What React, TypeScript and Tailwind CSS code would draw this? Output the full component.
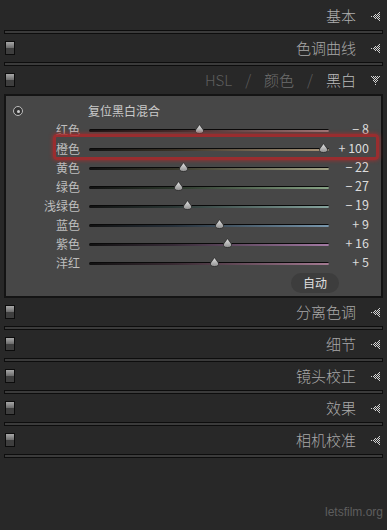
import React from "react";

const font = { fontFamily: '"Noto Sans CJK SC", "Noto Sans", sans-serif' };

function DotTriangle({ down = false }: { down?: boolean }) {
  const dots: React.ReactNode[] = [];
  for (let a = 0; a < 9; a++) {
    for (let b = 0; b < 9; b++) {
      // a: along the arrow, b: across
      const half = down ? (8 - a) / 2 : a / 2;
      if (b >= 4 - half && b <= 4 + half && (a + b) % 2 === 0) {
        const x = down ? b : a;
        const y = down ? a : b;
        dots.push(<rect key={`${a}-${b}`} x={x} y={y} width={1} height={1} fill="#d4d4d4" />);
      }
    }
  }
  return (
    <svg width={9} height={9} viewBox="0 0 9 9" className="shrink-0">
      {dots}
    </svg>
  );
}

function Switch() {
  return (
    <div className="flex h-[14px] w-[10px] flex-col border border-[#0c0c0c]">
      <div className="h-1/2 bg-[linear-gradient(to_bottom,#a8a8a8,#6a6a6a)]" />
      <div className="h-1/2 bg-[#3e3e3e]" />
    </div>
  );
}

function Separator() {
  return (
    <div className="mx-[4px] h-[4px] border border-[#0d0d0d] bg-[#3b3b3b]" />
  );
}

function Header({
  title,
  toggle = true,
  children,
}: {
  title?: string;
  toggle?: boolean;
  children?: React.ReactNode;
}) {
  return (
    <div className="flex h-[28px] items-center pl-[5px] pr-[7px]">
      <div className="w-[10px]">{toggle && <Switch />}</div>
      <div className="flex-1" />
      {children ?? <span className="text-[15px] font-light text-[#a9a9a9]">{title}</span>}
      <div className="ml-[15px]">
        <DotTriangle down={!!children} />
      </div>
    </div>
  );
}

function Thumb() {
  return (
    <svg width={11} height={10} viewBox="0 0 11 10">
      <defs>
        <linearGradient id="tg" x1="0" y1="0" x2="0" y2="1">
          <stop offset="0" stopColor="#e6e6e6" />
          <stop offset="1" stopColor="#8e8e8e" />
        </linearGradient>
      </defs>
      <path d="M5.5 0.5 L9.5 6 Q10 9.5 5.5 9.5 Q1 9.5 1.5 6 Z" fill="url(#tg)" stroke="#262626" strokeWidth="0.8" />
    </svg>
  );
}

const sliders = [
  { label: "红色", value: "− 8", v: -8, track: "bg-[linear-gradient(to_right,#111,#3a2a2a_35%,#9c7c7c)]" },
  { label: "橙色", value: "+ 100", v: 100, track: "bg-[linear-gradient(to_right,#111,#3a3226_35%,#a89478)]" },
  { label: "黄色", value: "− 22", v: -22, track: "bg-[linear-gradient(to_right,#111,#36362a_35%,#a4a486)]" },
  { label: "绿色", value: "− 27", v: -27, track: "bg-[linear-gradient(to_right,#111,#2a362a_35%,#88a486)]" },
  { label: "浅绿色", value: "− 19", v: -19, track: "bg-[linear-gradient(to_right,#111,#2a3634_35%,#86a49e)]" },
  { label: "蓝色", value: "+ 9", v: 9, track: "bg-[linear-gradient(to_right,#111,#26303a_35%,#7896ac)]" },
  { label: "紫色", value: "+ 16", v: 16, track: "bg-[linear-gradient(to_right,#111,#362a36_35%,#a47aa4)]" },
  { label: "洋红", value: "+ 5", v: 5, track: "bg-[linear-gradient(to_right,#111,#382a32_35%,#a47a92)]" },
];

function SliderRow({ label, value, v, track }: (typeof sliders)[number]) {
  // thumb centre: 6px at -100 .. 234px at +100 within a 239px track
  const left = 120 + v * 1.14 - 5.5;
  return (
    <div className="flex h-[19px] items-center">
      <div className="w-[74px] text-right text-[12px] text-[#bebebe]">{label}</div>
      <div className="relative ml-[9px] h-[19px] w-[240px]">
        <div
          className={`absolute left-0 right-0 top-[9px] h-[3px] rounded-full border-t border-[#0a0a0a] ${track}`}
        />
        <div className="absolute top-[4px]" style={{ left }}>
          <Thumb />
        </div>
      </div>
      <div className="w-[40px] text-right text-[12.5px] text-[#dcdcdc]">{value}</div>
    </div>
  );
}

export default function App() {
  return (
    <div className="h-[530px] w-[387px] overflow-hidden bg-[#282828] select-none" style={font}>
      <div className="flex h-[30px] items-center justify-end pr-[7px] pt-[2px]">
        <span className="text-[15px] font-light text-[#b0b0b0]">基本</span>
        <div className="ml-[15px]">
          <DotTriangle />
        </div>
      </div>
      <Separator />
      <Header title="色调曲线" />
      <Separator />
      <Header>
        <div className="flex items-center gap-[13px] text-[15px] font-light">
          <span className="text-[#5e5e5e]">HSL</span>
          <span className="text-[#5e5e5e]">/</span>
          <span className="text-[#6e6e6e]">颜色</span>
          <span className="text-[#5e5e5e]">/</span>
          <span className="text-[#bcbcbc]">黑白</span>
        </div>
      </Header>

      <div className="relative mx-[4px] h-[204px] border-2 border-[#141414] bg-[#474747] pt-[6px]">
        <div className="flex h-[18px] items-center">
          <div className="ml-[7px] flex h-[10px] w-[10px] items-center justify-center rounded-full border-[1.5px] border-[#bdbdbd] bg-[#333]">
            <div className="h-[3px] w-[3px] rounded-full bg-[#cfcfcf]" />
          </div>
          <span className="ml-[65px] text-[12px] text-[#cacaca]">复位黑白混合</span>
        </div>
        {sliders.map((s) => (
          <SliderRow key={s.label} {...s} />
        ))}
        <div className="flex justify-end pr-[42px] pt-[1px]">
          <div className="rounded-full bg-[#3d3d3d] px-[12px] py-[1px] text-[12px] text-[#e0e0e0]">自动</div>
        </div>
        <div className="pointer-events-none absolute left-[47px] top-[38px] h-[26px] w-[326px] rounded-[4px] border-[3px] border-[#a8292b]/85 shadow-[0_0_4px_#b02a2a]" />
      </div>

      <Header title="分离色调" />
      <Separator />
      <Header title="细节" />
      <Separator />
      <Header title="镜头校正" />
      <Separator />
      <Header title="效果" />
      <Separator />
      <Header title="相机校准" />
      <Separator />

      <div className="mt-[45px] pr-[4px] text-right text-[12px] text-[#5e5e5e]" style={{ fontFamily: '"Liberation Sans", sans-serif' }}>
        letsfilm.org
      </div>
    </div>
  );
}
